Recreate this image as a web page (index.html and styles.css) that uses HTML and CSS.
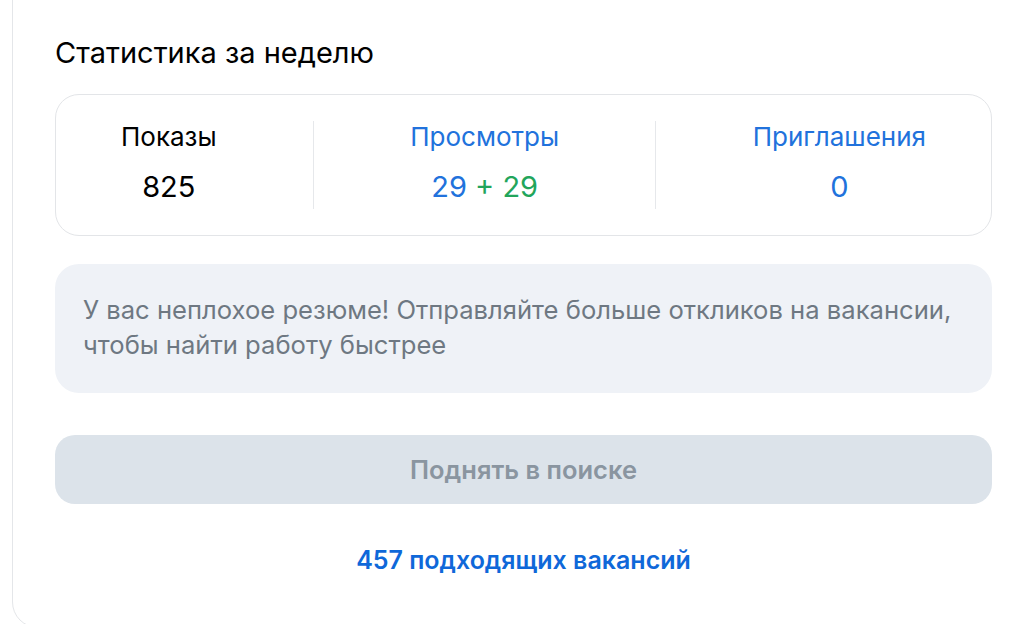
FILE: index.html
```html
<!DOCTYPE html>
<html lang="ru">
<head>
<meta charset="utf-8">
<link rel="stylesheet" href="styles.css">
</head>
<body>
<section class="card">
  <h2 class="title">Статистика за неделю</h2>
  <div class="stats">
    <div class="stat">
      <div class="stat-label">Показы</div>
      <div class="stat-value">825</div>
    </div>
    <div class="divider"></div>
    <div class="stat">
      <div class="stat-label blue">Просмотры</div>
      <div class="stat-value"><span class="blue">29</span> <span class="green">+ 29</span></div>
    </div>
    <div class="divider"></div>
    <div class="stat">
      <div class="stat-label blue">Приглашения</div>
      <div class="stat-value blue">0</div>
    </div>
  </div>
  <div class="info">У вас неплохое резюме! Отправляйте больше откликов на вакансии, чтобы найти работу быстрее</div>
  <button class="raise" type="button">Поднять в поиске</button>
  <a class="vacancies" href="#">457 подходящих вакансий</a>
</section>
</body>
</html>
```

FILE: styles.css
```css
html, body {
  margin: 0;
  padding: 0;
  background: #ffffff;
  overflow: hidden;
}
body {
  font-family: Inter, "Noto Sans", sans-serif;
  color: #000000;
}
.card {
  box-sizing: border-box;
  margin: -40px 0 0 12px;
  width: 1040px;
  height: 668px;
  padding: 76px 0 0 42px;
  border: 1.5px solid #e4e6e9;
  border-radius: 26px;
  display: flex;
  flex-direction: column;
  align-items: flex-start;
}
.title {
  margin: 0;
  font-size: 29px;
  line-height: 32px;
  font-weight: 400;
  color: #000;
}
.stats {
  box-sizing: border-box;
  margin-top: 25px;
  width: 937px;
  height: 142px;
  padding: 26px 65px;
  border: 1.5px solid #e3e5e8;
  border-radius: 24px;
  display: flex;
  justify-content: space-between;
}
.stat {
  display: flex;
  flex-direction: column;
  align-items: center;
}
.stat-label {
  font-size: 26px;
  line-height: 30px;
  margin-top: 1px;
}
.stat-value {
  margin-top: 18px;
  font-size: 29px;
  line-height: 34px;
}
.divider {
  width: 1px;
  align-self: stretch;
  background: #e6e8eb;
}
.blue { color: #2172dc; }
.green { color: #22a55b; }
.info {
  box-sizing: border-box;
  margin-top: 28px;
  width: 937px;
  padding: 28px 12px 31px 28px;
  border-radius: 24px;
  background: #eff2f7;
  color: #6e7882;
  font-size: 25.6px;
  line-height: 35px;
}
.raise {
  margin-top: 42px;
  width: 937px;
  height: 69px;
  border: none;
  border-radius: 20px;
  background: #dce3ea;
  color: #8a95a0;
  font-family: inherit;
  font-size: 25.5px;
  font-weight: 600;
  cursor: default;
}
.vacancies {
  width: 937px;
  margin-top: 41px;
  text-align: center;
  color: #0f68d9;
  font-size: 25px;
  font-weight: 600;
  line-height: 30px;
  text-decoration: none;
}
```
